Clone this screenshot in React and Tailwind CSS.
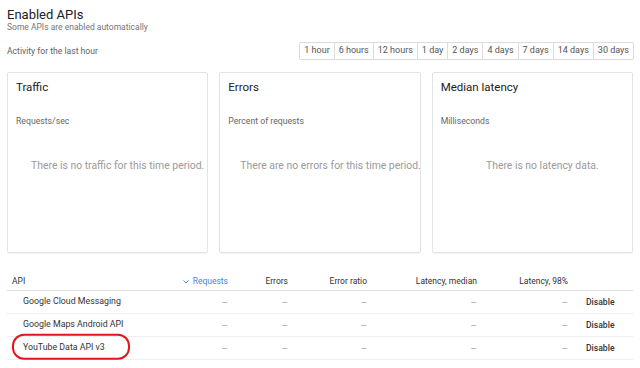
const ranges = ["1 hour", "6 hours", "12 hours", "1 day", "2 days", "4 days", "7 days", "14 days", "30 days"];

const cards = [
  { title: "Traffic", unit: "Requests/sec", empty: "There is no traffic for this time period." },
  { title: "Errors", unit: "Percent of requests", empty: "There are no errors for this time period." },
  { title: "Median latency", unit: "Milliseconds", empty: "There is no latency data." },
];

const apis = ["Google Cloud Messaging", "Google Maps Android API", "YouTube Data API v3"];

const cols = "grid grid-cols-[163px_62px_60px_79px_110px_91px_62px]";

function Dash() {
  return <div className="pr-[4px] text-right text-[10px] text-[#b0b0b0]">–</div>;
}

export default function App() {
  return (
    <div className="w-[640px] h-[368px] overflow-hidden bg-white px-[7px] text-[#212121]" style={{ fontFamily: "Roboto, 'Liberation Sans', sans-serif" }}>
      {/* header */}
      <div className="pt-[7px]">
        <h1 className="text-[13px] leading-[16px]">Enabled APIs</h1>
        <p className="text-[8.5px] leading-[11px] text-[#757575] -mt-[1px]">Some APIs are enabled automatically</p>
      </div>

      <div className="flex items-center justify-between mt-[9px] h-[18px]">
        <span className="text-[8.6px] text-[#616161]">Activity for the last hour</span>
        <div className="flex h-[18px] border border-[#dcdcdc] rounded-[2px] mr-[-1px]">
          {ranges.map((r, i) => (
            <div key={r} className={`flex items-center px-[4px] text-[9px] text-[#555] ${i > 0 ? "border-l border-[#dcdcdc]" : ""}`}>{r}</div>
          ))}
        </div>
      </div>

      {/* charts */}
      <div className="grid grid-cols-3 gap-[11px] mt-[12px]">
        {cards.map((c) => (
          <div key={c.title} className="h-[181px] border border-[#e3e3e3] rounded-[2px] shadow-[0_1px_1px_rgba(0,0,0,0.05)] flex flex-col">
            <div className="pl-[8px] pt-[6px] text-[11.5px] leading-[16px] text-[#212121]">{c.title}</div>
            <div className="pl-[8px] mt-[20px] text-[8.7px] leading-[12px] text-[#666]">{c.unit}</div>
            <div className="pl-[20px] mt-[32px] text-center whitespace-nowrap text-[10.4px] leading-[14px] text-[#9a9a9a]">{c.empty}</div>
          </div>
        ))}
      </div>

      {/* table */}
      <div className="mt-[20px]">
        <div className={`${cols} h-[18px] items-center border-b border-[#e0e0e0] text-[8.5px] text-[#333]`}>
          <div className="pl-[5px]">API</div>
          <div className="pr-[4px] flex items-center justify-end gap-[4px] text-[#4a7fe3]">
            <svg width="6" height="4" viewBox="0 0 6 4" fill="none" stroke="#4a7fe3" strokeWidth="1">
              <path d="M0.5 0.5 L3 3 L5.5 0.5" />
            </svg>
            Requests
          </div>
          <div className="pr-[4px] text-right">Errors</div>
          <div className="pr-[4px] text-right">Error ratio</div>
          <div className="pr-[4px] text-right">Latency, median</div>
          <div className="pr-[4px] text-right">Latency, 98%</div>
          <div></div>
        </div>
        {apis.map((name, i) => (
          <div key={name} className={`${cols} h-[23px] items-center border-b border-[#eeeeee]`}>
            <div className="relative pl-[16px] text-[8.8px] text-[#333]">
              {name}
              {i === 2 && (
                <div className="absolute left-[5px] top-1/2 -translate-y-[55%] w-[118px] h-[26px] border-2 border-[#e3141b] rounded-[12px]"></div>
              )}
            </div>
            <Dash />
            <Dash />
            <Dash />
            <Dash />
            <Dash />
            <div className="pl-[14px] text-[8.6px] font-medium text-[#333]">Disable</div>
          </div>
        ))}
      </div>
    </div>
  );
}
